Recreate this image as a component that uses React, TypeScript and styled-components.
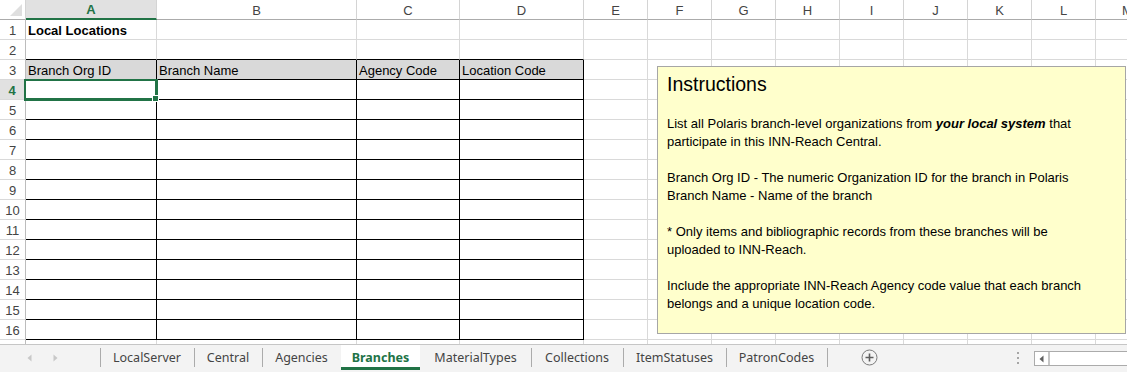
import React from "react";
import styled, { createGlobalStyle, css } from "styled-components";

const GlobalStyle = createGlobalStyle`
  html, body {
    margin: 0;
    padding: 0;
    background: #ffffff;
    overflow: hidden;
  }
  body {
    font-family: "Liberation Sans", Arial, sans-serif;
  }
`;

const GREEN = "#217346";
const GRID = "#d9d9d9";

const COLUMNS = [
  { key: "A", width: 131 },
  { key: "B", width: 200 },
  { key: "C", width: 103 },
  { key: "D", width: 124 },
  ...["E", "F", "G", "H", "I", "J", "K", "L", "M"].map((key) => ({ key, width: 64 })),
];

// row 17 only peeks out under the sheet edge, so it gets no label
const ROW_COUNT = 17;
const VISIBLE_ROWS = 16;
const TABLE_COLS = ["A", "B", "C", "D"];
const TABLE_FIRST = 3;
const TABLE_LAST = 16;

const CELL_TEXT: Record<string, string> = {
  A1: "Local Locations",
  A3: "Branch Org ID",
  B3: "Branch Name",
  C3: "Agency Code",
  D3: "Location Code",
};

const SHEETS = [
  { name: "LocalServer", width: 94 },
  { name: "Central", width: 68 },
  { name: "Agencies", width: 79 },
  { name: "Branches", width: 79, active: true },
  { name: "MaterialTypes", width: 111 },
  { name: "Collections", width: 92 },
  { name: "ItemStatuses", width: 103 },
  { name: "PatronCodes", width: 101 },
];

const Window = styled.div`
  width: 1127px;
  height: 372px;
  display: flex;
  flex-direction: column;
  background: #ffffff;
`;

const Sheet = styled.div`
  position: relative;
  height: 344px;
  overflow: hidden;
  flex-shrink: 0;
`;

const Grid = styled.div`
  display: grid;
  grid-template-columns: 26px ${COLUMNS.map((c) => `${c.width}px`).join(" ")};
  grid-auto-rows: 20px;
`;

const Corner = styled.div`
  box-sizing: border-box;
  border-bottom: 1px solid #ababab;
  border-right: 1px solid #d4d4d4;
  display: flex;
  align-items: flex-end;
  justify-content: flex-end;
  padding: 0 3px 3px 0;
`;

const ColHeader = styled.div<{ $active?: boolean }>`
  box-sizing: border-box;
  border-right: 1px solid #d4d4d4;
  border-bottom: 1px solid #ababab;
  display: flex;
  align-items: center;
  justify-content: center;
  font-size: 13px;
  color: #444444;
  padding-top: 1px;
  ${({ $active }) =>
    $active &&
    css`
      background: #e1e1e1;
      color: ${GREEN};
      font-weight: bold;
      border-bottom: 2px solid ${GREEN};
    `}
`;

const RowHeader = styled.div<{ $active?: boolean }>`
  box-sizing: border-box;
  border-right: 1px solid #bcbcbc;
  border-bottom: 1px solid #d9d9d9;
  display: flex;
  align-items: center;
  justify-content: center;
  font-size: 13px;
  color: #444444;
  padding-top: 2px;
  ${({ $active }) =>
    $active &&
    css`
      background: #e1e1e1;
      color: ${GREEN};
      font-weight: bold;
      border-right: 2px solid ${GREEN};
    `}
`;

const Cell = styled.div<{
  $boxed?: boolean;
  $topEdge?: boolean;
  $shade?: boolean;
  $bold?: boolean;
  $selected?: boolean;
}>`
  box-sizing: border-box;
  border-right: 1px solid ${GRID};
  border-bottom: 1px solid ${GRID};
  display: flex;
  align-items: flex-end;
  padding: 0 0 0 2px;
  font-size: 13px;
  line-height: 17px;
  color: #000000;
  white-space: nowrap;
  overflow: visible;
  position: relative;
  z-index: ${({ $selected }) => ($selected ? 2 : 1)};
  ${({ $bold }) => $bold && "font-weight: bold;"}
  ${({ $shade }) => $shade && "background: #d9d9d9;"}
  ${({ $boxed }) =>
    $boxed &&
    css`
      border-right-color: #000000;
      border-bottom-color: #000000;
    `}
  ${({ $topEdge }) => $topEdge && "border-bottom-color: #000000;"}
  ${({ $selected }) =>
    $selected &&
    css`
      &::after {
        content: "";
        position: absolute;
        left: -2px;
        top: -1px;
        width: 134px;
        height: 22px;
        box-sizing: border-box;
        border-left: 2px solid ${GREEN};
        border-top: 2px solid ${GREEN};
        border-right: 3px solid ${GREEN};
        border-bottom: 3px solid ${GREEN};
      }
      &::before {
        content: "";
        position: absolute;
        left: 127px;
        top: 16px;
        width: 5px;
        height: 5px;
        background: ${GREEN};
        outline: 1px solid #ffffff;
        z-index: 3;
      }
    `}
`;

const InstructionsBox = styled.div`
  position: absolute;
  left: 657px;
  top: 66px;
  width: 469px;
  height: 268px;
  box-sizing: border-box;
  background: #ffffcc;
  border: 1px solid #a6a6a6;
  padding: 4px 9px;
  z-index: 5;
  color: #000000;
`;

const InstructionsTitle = styled.div`
  font-size: 19.5px;
  line-height: 26px;
`;

const Para = styled.p`
  margin: 18px 0 0;
  font-size: 13px;
  line-height: 18px;
  white-space: nowrap;
`;

const TabBar = styled.div`
  flex: 1;
  box-sizing: border-box;
  border-top: 1px solid #c6c6c6;
  background: #f3f3f3;
  display: flex;
  align-items: flex-start;
  font-family: "Noto Sans", "Open Sans", sans-serif;
  overflow: hidden;
`;

const NavArea = styled.div`
  width: 100px;
  height: 25px;
  display: flex;
  align-items: center;
  gap: 21px;
  padding-left: 27px;
  box-sizing: border-box;
  flex-shrink: 0;
`;

const Tab = styled.div<{ $width: number; $active?: boolean; $sepLeft?: boolean; $sepRight?: boolean }>`
  position: relative;
  box-sizing: border-box;
  width: ${({ $width }) => $width}px;
  height: 25px;
  flex-shrink: 0;
  display: flex;
  align-items: center;
  justify-content: center;
  font-size: 12.5px;
  color: #444444;
  ${({ $active }) =>
    $active &&
    css`
      background: #ffffff;
      color: ${GREEN};
      font-weight: bold;
      border-bottom: 3px solid ${GREEN};
      padding-top: 3px;
    `}
  ${({ $sepLeft }) =>
    $sepLeft &&
    css`
      &::before {
        content: "";
        position: absolute;
        left: 0;
        top: 3px;
        height: 19px;
        width: 1px;
        background: #ababab;
      }
    `}
  ${({ $sepRight }) =>
    $sepRight &&
    css`
      &::after {
        content: "";
        position: absolute;
        right: -1px;
        top: 3px;
        height: 19px;
        width: 1px;
        background: #ababab;
      }
    `}
`;

const AddSheet = styled.div`
  margin-left: 34px;
  height: 25px;
  display: flex;
  align-items: center;
`;

const RightTools = styled.div`
  margin-left: auto;
  height: 25px;
  display: flex;
  align-items: center;
`;

const Dots = styled.div`
  display: flex;
  flex-direction: column;
  gap: 3px;
  margin-right: 15px;
  span {
    width: 2px;
    height: 2px;
    background: #a6a6a6;
  }
`;

const HScroll = styled.div`
  width: 100px;
  height: 15px;
  box-sizing: border-box;
  border: 1px solid #ababab;
  background: #ffffff;
  display: flex;
  margin-right: -7px;
  margin-top: 2px;
`;

const ScrollButton = styled.div`
  width: 15px;
  height: 100%;
  box-sizing: border-box;
  border-right: 2px solid #c6c6c6;
  display: flex;
  align-items: center;
  justify-content: center;
`;

const Triangle = ({ dir, color }: { dir: "left" | "right"; color: string }) => (
  <svg width="5" height="8" viewBox="0 0 5 8">
    {dir === "left" ? (
      <polygon points="4.5,0.5 4.5,7.5 0.5,4" fill={color} />
    ) : (
      <polygon points="0.5,0.5 0.5,7.5 4.5,4" fill={color} />
    )}
  </svg>
);

const App: React.FC = () => {
  const rows = Array.from({ length: ROW_COUNT }, (_, i) => i + 1);

  return (
    <>
      <GlobalStyle />
      <Window>
        <Sheet>
          <Grid>
            <Corner>
              <svg width="12" height="12" viewBox="0 0 12 12">
                <polygon points="12,0 12,12 0,12" fill="#dfdfdf" />
              </svg>
            </Corner>
            {COLUMNS.map((c) => (
              <ColHeader key={c.key} $active={c.key === "A"}>
                {c.key}
              </ColHeader>
            ))}
            {rows.map((r) => (
              <React.Fragment key={r}>
                <RowHeader $active={r === 4}>{r <= VISIBLE_ROWS ? r : null}</RowHeader>
                {COLUMNS.map((c) => {
                  const inTableCol = TABLE_COLS.includes(c.key);
                  const boxed = inTableCol && r >= TABLE_FIRST && r <= TABLE_LAST;
                  const text = CELL_TEXT[`${c.key}${r}`];
                  return (
                    <Cell
                      key={c.key}
                      $boxed={boxed}
                      $topEdge={inTableCol && r === TABLE_FIRST - 1}
                      $shade={inTableCol && r === TABLE_FIRST}
                      $bold={r === 1}
                      $selected={c.key === "A" && r === 4}
                    >
                      {text}
                    </Cell>
                  );
                })}
              </React.Fragment>
            ))}
          </Grid>
          <InstructionsBox>
            <InstructionsTitle>Instructions</InstructionsTitle>
            <Para>
              List all Polaris branch-level organizations from{" "}
              <b>
                <i>your local system</i>
              </b>{" "}
              that
              <br />
              participate in this INN-Reach Central.
            </Para>
            <Para>
              Branch Org ID - The numeric Organization ID for the branch in Polaris
              <br />
              Branch Name - Name of the branch
            </Para>
            <Para>
              * Only items and bibliographic records from these branches will be
              <br />
              uploaded to INN-Reach.
            </Para>
            <Para>
              Include the appropriate INN-Reach Agency code value that each branch
              <br />
              belongs and a unique location code.
            </Para>
          </InstructionsBox>
        </Sheet>
        <TabBar>
          <NavArea>
            <Triangle dir="left" color="#c8c8c8" />
            <Triangle dir="right" color="#c8c8c8" />
          </NavArea>
          {SHEETS.map((s, i) => {
            const prevActive = i > 0 && SHEETS[i - 1].active;
            return (
              <Tab
                key={s.name}
                $width={s.width}
                $active={s.active}
                $sepLeft={!s.active && !prevActive}
                $sepRight={i === SHEETS.length - 1}
              >
                {s.name}
              </Tab>
            );
          })}
          <AddSheet>
            <svg width="17" height="17" viewBox="0 0 17 17">
              <circle cx="8.5" cy="8.5" r="7.5" fill="none" stroke="#7a7a7a" strokeWidth="1" />
              <path d="M8.5 4.5v8M4.5 8.5h8" stroke="#5f5f5f" strokeWidth="1.6" />
            </svg>
          </AddSheet>
          <RightTools>
            <Dots>
              <span />
              <span />
              <span />
            </Dots>
            <HScroll>
              <ScrollButton>
                <Triangle dir="left" color="#606060" />
              </ScrollButton>
            </HScroll>
          </RightTools>
        </TabBar>
      </Window>
    </>
  );
};

export default App;
